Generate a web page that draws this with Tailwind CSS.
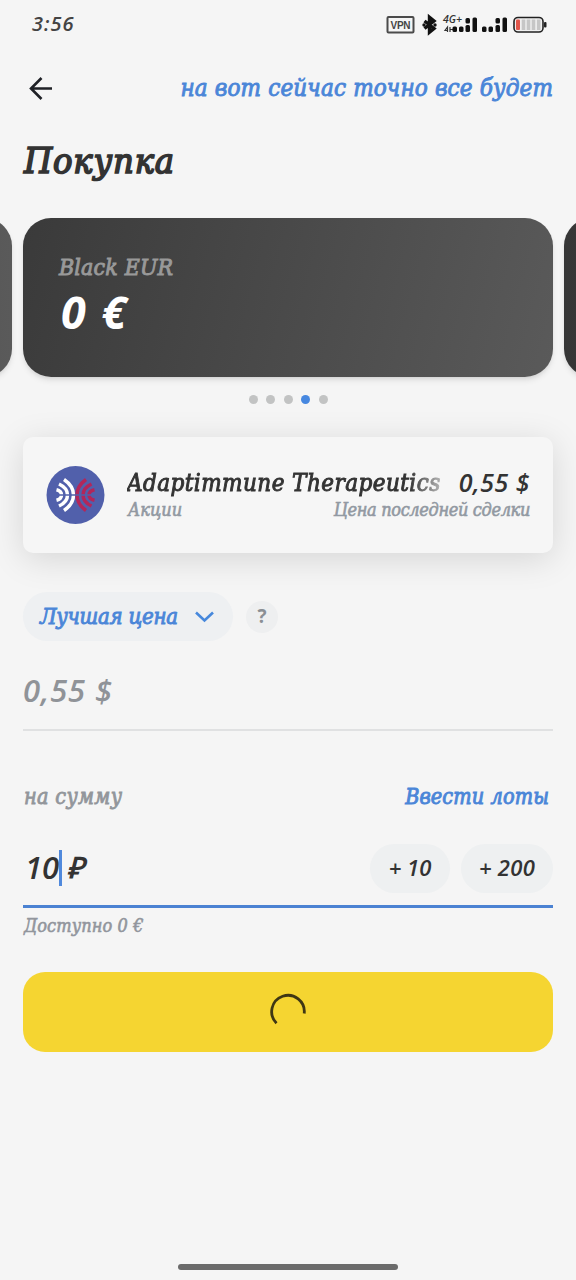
<!DOCTYPE html>
<html lang="ru">
<head>
<meta charset="utf-8">
<title>Покупка</title>
<script src="https://cdn.jsdelivr.net/npm/@tailwindcss/browser@4"></script>
</head>
<body class="bg-[#f5f5f5]">
<main class="flex h-[1280px] w-[576px] flex-col overflow-hidden bg-[#f5f5f5] font-['DejaVu_Serif_Condensed','DejaVu_Serif',serif] text-[#333] italic whitespace-nowrap">
  <!-- Status bar -->
  <header class="flex h-12 shrink-0 items-center justify-between pr-[29px] pl-8">
    <span class="font-['Open_Sans',sans-serif] text-[20px] font-semibold tracking-[1px] text-[#444]">3:56</span>
    <svg class="h-6 w-[161px]" viewBox="386 12 161 24">
      <rect x="387.5" y="17" width="26" height="15.5" rx="1" fill="none" stroke="#4b4b4b" stroke-width="2"/>
      <text x="390.5" y="28.6" textLength="20" font-family="Liberation Sans" font-style="normal" font-weight="700" font-size="10" fill="#444">VPN</text>
      <path d="M424.500 21l9.500 7.500-4.500 3.700V17.300l4.500 3.700-9.500 7.500" fill="none" stroke="#111" stroke-width="3.400"/>
      <circle cx="424" cy="25" r="1.700" fill="#111"/><circle cx="435" cy="25" r="1.700" fill="#111"/>
      <text x="443" y="23.300" textLength="19" font-family="Open Sans" font-weight="600" font-size="10.500" fill="#333">4G+</text>
      <path d="M447.500 32v-5l-2.500 3.500h3M450 27v5M450 29.500h3" fill="none" stroke="#333" stroke-width="1.200"/>
      <g fill="#111">
        <rect x="452.500" y="26.500" width="4.500" height="5.500" rx="1.500"/><rect x="459" y="26.500" width="4.500" height="5.500" rx="1.500"/>
        <rect x="465.500" y="18" width="4.500" height="5.500" rx="1.500"/><rect x="465.500" y="25" width="4.500" height="7" rx="1.500"/><rect x="472.500" y="17.500" width="4.500" height="14.500" rx="1.500"/>
        <rect x="482" y="26.500" width="4.500" height="5.500" rx="1.500"/><rect x="488.500" y="26.500" width="4.500" height="5.500" rx="1.500"/>
        <rect x="495.500" y="18" width="4.500" height="5.500" rx="1.500"/><rect x="495.500" y="25" width="4.500" height="7" rx="1.500"/><rect x="502.500" y="17.500" width="4.500" height="14.500" rx="1.500"/>
      </g>
      <rect x="514" y="17.500" width="29" height="14.500" rx="4" fill="#f0f0f0" stroke="#222" stroke-width="1.600"/>
      <rect x="544" y="22" width="2.500" height="5.500" rx="1" fill="#222"/>
      <rect x="516" y="19.500" width="4" height="10.500" rx="1" fill="#e2574c"/>
      <path d="M523.500 19.500v10.500M528.500 19.500v10.500M533.500 19.500v10.500M538.700 19.500v10.500" stroke="#c6c6c6" stroke-width="3.600"/>
    </svg>
  </header>

  <!-- Navigation -->
  <nav class="flex h-20 shrink-0 items-center justify-between pr-[23px] pl-[28px]">
    <svg class="h-6 w-6" viewBox="0 0 24 24" fill="none" stroke="#1f2126" stroke-width="2.600"><path d="M24 12.500H2.500M13.500 2L3 12.500l10.500 10.500"/></svg>
    <span class="text-[24px] leading-8 tracking-[0.13px] text-[#4b86d8] [-webkit-text-stroke:0.9px_#4b86d8]">на вот сейчас точно все будет</span>
  </nav>

  <h1 class="flex h-[90px] shrink-0 px-6 pt-[8px] text-[36px] leading-[50px] tracking-[0.8px] [-webkit-text-stroke:1.6px_#333]">Покупка</h1>

  <!-- Account carousel -->
  <section class="flex h-[159px] shrink-0 justify-center gap-[11px]">
    <div class="w-[530px] shrink-0 rounded-[28px] bg-linear-to-r from-[#3a3a3a] to-[#5a5a5a] shadow-md"></div>
    <article class="flex w-[530px] shrink-0 flex-col rounded-[28px] bg-linear-[105deg] from-[#3a3a3a] to-[#5a5a5a] pt-[31px] pl-9 shadow-md">
      <span class="flex h-9 items-center text-[23px] tracking-[0.15px] text-[#999] [-webkit-text-stroke:0.9px_#999]">Black EUR</span>
      <span class="flex h-[54px] items-center pl-[2px] font-['Open_Sans',sans-serif] text-[45px] font-bold tracking-[2px] text-white">0 €</span>
    </article>
    <div class="w-[530px] shrink-0 rounded-[28px] bg-linear-to-r from-[#363636] to-[#5a5a5a] shadow-md"></div>
  </section>
  <div class="flex h-[60px] shrink-0 justify-center gap-[8.500px] pt-[18px]">
    <i class="size-[9px] rounded-full bg-[#c2c3c3]"></i><i class="size-[9px] rounded-full bg-[#c2c3c3]"></i><i class="size-[9px] rounded-full bg-[#c2c3c3]"></i><i class="size-[9px] rounded-full bg-[#4788e0]"></i><i class="size-[9px] rounded-full bg-[#c2c3c3]"></i>
  </div>

  <!-- Instrument -->
  <section class="mx-[23px] flex h-[116px] shrink-0 items-center gap-[22px] rounded-[10px] bg-[#f6f6f6] pr-[23px] pl-[23px] shadow-[0_6px_34px_rgba(0,0,0,0.13)]">
    <svg class="size-[59px] shrink-0" viewBox="0 0 59 59" fill="none" stroke-width="3.500">
      <circle cx="29.500" cy="29" r="29" fill="#5160ab"/>
      <g stroke="#fff"><path d="M18 13.500Q27.500 20 27.500 29T18 44.500"/><path d="M13 18Q21.500 22 21.500 29T13 40"/><path d="M10.500 23.800Q15.500 25 15.500 29T10.500 34.200"/></g>
      <g stroke="#b3265a"><path d="M40 13.500Q31 20 31 29T40 44.500"/><path d="M45.500 18Q37 22 37 29T45.500 40"/><path d="M48.500 23.800Q43 25 43 29T48.500 34.200"/></g>
      <path d="M10 29h39" stroke="#5160ab" stroke-width="1.500"/>
    </svg>
    <div class="flex flex-1 flex-col">
      <div class="flex h-7 items-center justify-between text-[24px]">
        <span class="tracking-[0.42px] [-webkit-text-stroke:0.9px_#333] mask-r-from-90% mask-r-to-105%">Adaptimmune Therapeutics</span>
        <span class="font-['Open_Sans',sans-serif] text-[25px] font-semibold tracking-[0.5px]">0,55 $</span>
      </div>
      <div class="flex h-6 items-center justify-between text-[18px] text-[#9299a2] [-webkit-text-stroke:0.600px_#9299a2]">
        <span class="pl-px">Акции</span><span class="tracking-[-0.36px]">Цена последней сделки</span>
      </div>
    </div>
  </section>

  <!-- Price -->
  <div class="mt-[39px] flex h-[49px] shrink-0 items-center gap-[13px] pl-[23px]">
    <button class="flex h-[49px] w-[210px] items-center justify-between rounded-[25px] bg-[#eef0f2] pr-[19px] pl-[17px] text-[22px] tracking-[-0.25px] text-[#4b86d8] italic [-webkit-text-stroke:0.900px_#4b86d8]">Лучшая цена
      <svg class="h-3 w-[19px]" viewBox="0 0 19 12" fill="none" stroke="#4788dc" stroke-width="2.600"><path d="M1 1.500l8.500 8 8.500-8"/></svg>
    </button>
    <span class="flex size-8 items-center justify-center rounded-full bg-[#eeeff0] font-['Open_Sans',sans-serif] text-[19px] font-bold text-[#8b8f94] not-italic">?</span>
  </div>
  <div class="mx-[23px] flex h-[90px] shrink-0 items-center border-b-2 border-[#e0e1e2] pt-[10px] font-['Open_Sans',sans-serif] text-[31px] font-semibold tracking-[0.9px] text-[#909398]">0,55 $</div>

  <!-- Amount -->
  <div class="mt-[46px] flex h-10 shrink-0 items-center justify-between pt-px pr-[27px] pl-6 text-[21.500px]">
    <span class="tracking-[0.3px] text-[#92969b] [-webkit-text-stroke:0.800px_#92969b]">на сумму</span>
    <span class="tracking-[0.1px] text-[#4b86d8] [-webkit-text-stroke:0.900px_#4b86d8]">Ввести лоты</span>
  </div>
  <div class="mx-[23px] flex h-[91px] shrink-0 items-center border-b-3 border-[#4b82d2] pt-[14px] font-['Open_Sans',sans-serif] font-semibold">
    <span class="pb-[2px] pl-[2px] text-[31px]">10</span><i class="h-[36px] w-[3px] bg-[#5089dc]"></i><span class="pb-[2px] pl-[5px] text-[29px] font-bold">₽</span>
    <span class="ml-auto flex h-[49px] w-20 items-center justify-center rounded-[25px] bg-[#eef0f1] pb-px text-[22px]">+ 10</span>
    <span class="ml-[11px] flex h-[49px] w-[92px] items-center justify-center rounded-[25px] bg-[#eef0f1] pb-px text-[22px] tracking-[0.3px]">+ 200</span>
  </div>
  <div class="flex h-[64px] shrink-0 items-start pt-1 pl-6 text-[18px] leading-[28px] tracking-[0.1px] text-[#92969d] [-webkit-text-stroke:0.600px_#92969d]">Доступно 0 €</div>

  <button class="mx-[23px] flex h-[80px] shrink-0 items-center justify-center rounded-[22px] bg-[#f5d531]">
    <svg class="size-10" viewBox="0 0 40 40" fill="none" stroke="#3f3714" stroke-width="2.800"><path d="M8.500 31.200A16.300 16.300 0 1 1 36.200 21.500"/></svg>
  </button>
  <div class="mx-auto mt-auto mb-[10px] h-[6px] w-[220px] shrink-0 rounded-full bg-[#6b6b6b]"></div>
</main>
</body>
</html>
